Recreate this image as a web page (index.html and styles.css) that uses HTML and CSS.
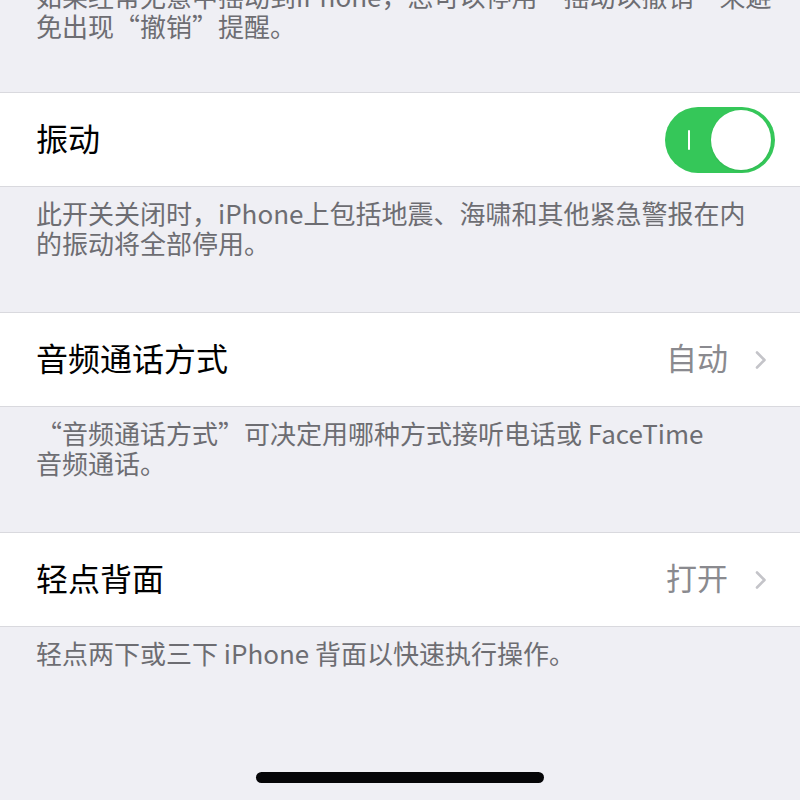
FILE: index.html
```html
<!DOCTYPE html>
<html lang="zh-CN">
<head>
<meta charset="utf-8">
<title>触控</title>
<link rel="stylesheet" href="styles.css">
</head>
<body>
<main class="settings">
  <p class="note note-first">如果经常无意中摇动到iPhone，您可以停用“摇动以撤销”来避<br>免出现“撤销”提醒。</p>

  <section class="cell">
    <span class="cell-title">振动</span>
    <span class="switch is-on" role="switch" aria-checked="true">
      <span class="switch-mark"></span>
      <span class="switch-knob"></span>
    </span>
  </section>
  <p class="note">此开关关闭时，iPhone上包括地震、海啸和其他紧急警报在内<br>的振动将全部停用。</p>

  <section class="cell">
    <span class="cell-title">音频通话方式</span>
    <span class="cell-value">自动</span>
    <svg class="chevron" viewBox="0 0 12 18" width="12" height="18" aria-hidden="true">
      <path d="M2 1.5 L9.5 9 L2 16.5" fill="none" stroke="currentColor" stroke-width="2.6" stroke-linecap="round" stroke-linejoin="round"/>
    </svg>
  </section>
  <p class="note">“音频通话方式”可决定用哪种方式接听电话或 FaceTime<br>音频通话。</p>

  <section class="cell">
    <span class="cell-title">轻点背面</span>
    <span class="cell-value">打开</span>
    <svg class="chevron" viewBox="0 0 12 18" width="12" height="18" aria-hidden="true">
      <path d="M2 1.5 L9.5 9 L2 16.5" fill="none" stroke="currentColor" stroke-width="2.6" stroke-linecap="round" stroke-linejoin="round"/>
    </svg>
  </section>
  <p class="note note-last">轻点两下或三下 iPhone 背面以快速执行操作。</p>

  <div class="home-area"><span class="home-indicator"></span></div>
</main>
</body>
</html>
```

FILE: styles.css
```css
html, body {
  margin: 0;
  padding: 0;
  background: #efeff4;
  overflow: hidden;
}

body {
  font-family: "Noto Sans CJK SC", "Noto Sans", sans-serif;
  -webkit-font-smoothing: antialiased;
}

.settings {
  display: flex;
  flex-direction: column;
  width: 800px;
  height: 800px;
}

.settings > * {
  flex-shrink: 0;
}

/* group footer text */
.note {
  margin: 0;
  padding: 11px 36px 54px;
  font-size: 26px;
  line-height: 30px;
  color: #6d6d72;
  white-space: nowrap;
}

.note-first {
  margin-top: -30px;
  padding-bottom: 51px;
}

.note-last {
  padding-bottom: 0;
}

/* white row */
.cell {
  display: flex;
  align-items: center;
  height: 93px;
  padding: 0 33px 0 36px;
  background: #ffffff;
  border-top: 1px solid #d9d9de;
  border-bottom: 1px solid #d9d9de;
}

.cell-title {
  flex: 1;
  font-size: 32px;
  line-height: 40px;
  padding-bottom: 5px;
  color: #000000;
}

.cell-value {
  font-size: 31px;
  line-height: 40px;
  padding-bottom: 5px;
  color: #8a8a8f;
  margin-right: 27px;
}

.chevron {
  color: #c4c4c9;
  display: block;
}

/* toggle switch */
.switch {
  display: flex;
  align-items: center;
  box-sizing: border-box;
  width: 110px;
  height: 66px;
  margin-right: -8px;
  padding: 0 4px 0 23px;
  border-radius: 33px;
  background: #35c759;
}

.switch-mark {
  width: 2px;
  height: 20px;
  border-radius: 1px;
  background: #ffffff;
}

.switch-knob {
  margin-left: auto;
  width: 60px;
  height: 60px;
  border-radius: 50%;
  background: #ffffff;
  box-shadow: 0 1px 2px rgba(0, 0, 0, 0.08);
}

/* home indicator */
.home-area {
  display: flex;
  justify-content: center;
  padding-top: 104px;
}

.home-indicator {
  width: 288px;
  height: 11px;
  border-radius: 6px;
  background: #050507;
}
```
